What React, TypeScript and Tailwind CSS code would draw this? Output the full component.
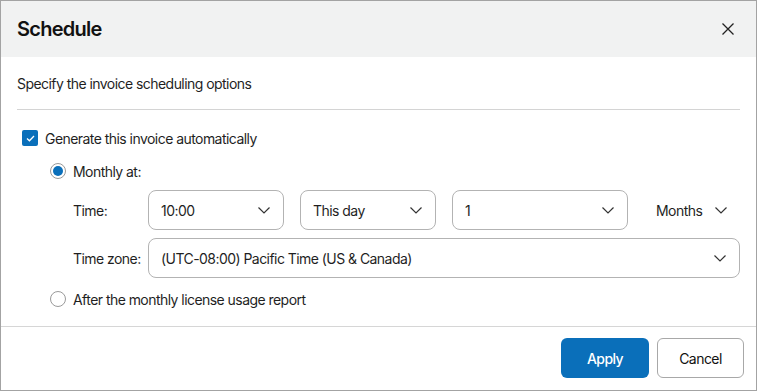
import React from 'react';

const font = { fontFamily: 'Inter, "Noto Sans", sans-serif' };

function Chevron({ className = '' }: { className?: string }) {
  return (
    <svg viewBox="0 0 12 7" className={`w-[12px] h-[7px] ${className}`} fill="none">
      <path d="M0.5 0.5 L6 6 L11.5 0.5" stroke="#333" strokeWidth="1.2" />
    </svg>
  );
}

function Select({ value, width }: { value: string; width: string }) {
  return (
    <div
      className={`${width} h-[40px] flex items-center justify-between pl-[12px] pr-[13px] border border-[#b3b3b3] rounded-[8px] bg-white`}
    >
      <span className="text-[#1f1f1f]">{value}</span>
      <Chevron />
    </div>
  );
}

function Radio({ checked }: { checked?: boolean }) {
  return (
    <div className="w-[16px] h-[16px] rounded-full border border-[#9a9a9a] flex items-center justify-center bg-white">
      {checked && <div className="w-[10px] h-[10px] rounded-full bg-[#0a6fba]" />}
    </div>
  );
}

export default function App() {
  return (
    <div
      className="w-[757px] h-[391px] border border-[#a3a3a3] bg-white flex flex-col text-[#1f1f1f] text-[14px] tracking-[-0.55px]"
      style={font}
    >
      {/* Header */}
      <div className="h-[56px] bg-[#f1f2f2] flex items-center justify-between pl-[16px] pr-[22px]">
        <h1 className="text-[20px] font-semibold tracking-[-0.75px] text-[#111]">Schedule</h1>
        <svg viewBox="0 0 12 12" className="w-[12px] h-[12px]" fill="none">
          <path d="M0.5 0.5 L11.5 11.5 M11.5 0.5 L0.5 11.5" stroke="#222" strokeWidth="1.3" />
        </svg>
      </div>

      {/* Body */}
      <div className="flex-1 px-[16px]">
        <p className="mt-[17px] leading-[20px]">Specify the invoice scheduling options</p>
        <div className="mt-[15px] h-px bg-[#d4d4d4]" />

        <div className="mt-[18px] h-[20px] flex items-center">
          <div className="ml-[5px] w-[16px] h-[16px] rounded-[2px] bg-[#0a6fba] flex items-center justify-center">
            <svg viewBox="0 0 10 8" className="w-[9px] h-[7px]" fill="none">
              <path d="M1 4 L3.8 6.6 L9 1.2" stroke="white" strokeWidth="1.5" />
            </svg>
          </div>
          <span className="ml-[7px]">Generate this invoice automatically</span>
        </div>

        <div className="mt-[13px] ml-[33px] h-[20px] flex items-center">
          <Radio checked />
          <span className="ml-[7px]">Monthly at:</span>
        </div>

        <div className="mt-[9px] ml-[56px] flex items-center">
          <span className="w-[75px]">Time:</span>
          <div className="flex items-center gap-[16px]">
            <Select value="10:00" width="w-[136px]" />
            <Select value="This day" width="w-[136px]" />
            <Select value="1" width="w-[176px]" />
            <div className="ml-[12px] flex items-center gap-[13px]">
              <span>Months</span>
              <Chevron />
            </div>
          </div>
        </div>

        <div className="mt-[8px] ml-[56px] flex items-center">
          <span className="w-[75px]">Time zone:</span>
          <Select value="(UTC-08:00) Pacific Time (US & Canada)" width="w-[592px]" />
        </div>

        <div className="mt-[11px] ml-[33px] h-[20px] flex items-center">
          <Radio />
          <span className="ml-[7px]">After the monthly license usage report</span>
        </div>
      </div>

      {/* Footer */}
      <div className="h-[64px] border-t border-[#d6d6d6] flex items-start justify-end gap-[8px] pt-[11px] pr-[12px]">
        <button className="w-[88px] h-[40px] rounded-[6px] bg-[#0a6fba] text-white font-medium">
          Apply
        </button>
        <button className="w-[87px] h-[40px] rounded-[6px] border border-[#a8a8a8] bg-white text-[#111]">
          Cancel
        </button>
      </div>
    </div>
  );
}
